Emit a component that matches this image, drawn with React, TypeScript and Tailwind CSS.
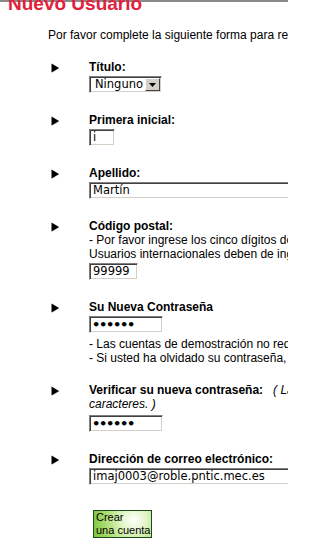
import React from "react";

const Arrow = () => (
  <svg width="9" height="10" viewBox="0 0 9 10" className="block">
    <polygon points="1.2,1.2 8.6,5.4 1.2,9.6" fill="#9a9a9a" opacity="0.6" />
    <polygon points="0.5,0.5 8,5 0.5,9.5" fill="#000" />
  </svg>
);

const inputCls =
  "h-[17px] bg-white border border-t-[#808080] border-l-[#808080] border-b-white border-r-white shadow-[inset_1px_1px_0_#404040,inset_-1px_-1px_0_#d4d0c8] font-['DejaVu_Sans',sans-serif] text-[11.5px] leading-[15px] text-black pl-[3px] whitespace-nowrap overflow-hidden";

const pwCls =
  "h-[17px] bg-white border border-t-[#808080] border-l-[#808080] border-b-white border-r-white shadow-[inset_1px_1px_0_#404040,inset_-1px_-1px_0_#d4d0c8] font-['DejaVu_Sans',sans-serif] text-[13px] leading-[15px] font-bold tracking-[-1.3px] text-black pl-[2px] whitespace-nowrap overflow-hidden";

function Row({
  label,
  children,
  pb = "pb-[20px]",
}: {
  label: React.ReactNode;
  children: React.ReactNode;
  pb?: string;
}) {
  return (
    <div className={`flex ${pb}`}>
      <div className="w-[41px] shrink-0 pl-[3px] pt-[3px]">
        <Arrow />
      </div>
      <div className="flex flex-col">
        <div className="text-[12px] leading-[14px] font-bold text-black whitespace-nowrap">{label}</div>
        {children}
      </div>
    </div>
  );
}

export default function App() {
  return (
    <div className="relative w-[288px] h-[550px] overflow-hidden bg-white font-['Liberation_Sans',Arial,sans-serif] text-black">
      <div className="absolute top-0 left-0 right-0 h-[2px] bg-[#8a8a8a]" />
      <div className="relative z-10 -mt-[6px] pl-[8px] text-[19px] leading-[19px] font-bold text-[#e3203b] whitespace-nowrap">
        Nuevo Usuario
      </div>
      <div className="mt-[15px] pl-[48px] text-[12px] leading-[14px] whitespace-nowrap">
        Por favor complete la siguiente forma para registrarse como nuevo usuario.
      </div>

      <div className="mt-[18px] pl-[48px] w-[700px]">
        <Row label="Título:">
          <div className="mt-[2px] w-[73px] h-[17px] flex items-center bg-white border border-t-[#808080] border-l-[#808080] border-b-white border-r-white shadow-[inset_1px_1px_0_#404040,inset_-1px_-1px_0_#d4d0c8]">
            <span className="flex-1 pl-[5px] font-['DejaVu_Sans',sans-serif] text-[11.5px] leading-[15px]">Ninguno</span>
            <span className="w-[15px] h-[13px] mr-[1px] flex items-center justify-center bg-[#d4d0c8] border border-t-white border-l-white border-b-[#404040] border-r-[#404040]">
              <svg width="7" height="4" viewBox="0 0 7 4"><polygon points="0,0 7,0 3.5,4" fill="#000" /></svg>
            </span>
          </div>
        </Row>

        <Row label="Primera inicial:">
          <div className={`mt-[2px] w-[26px] ${inputCls}`}>i</div>
        </Row>

        <Row label="Apellido:">
          <div className={`mt-[2px] w-[260px] ${inputCls}`}>Martín</div>
        </Row>

        <Row label="Código postal:">
          <div className="text-[12px] leading-[14px] font-normal whitespace-nowrap">
            - Por favor ingrese los cinco dígitos de su código postal.
          </div>
          <div className="text-[12px] leading-[14px] font-normal whitespace-nowrap">
            Usuarios internacionales deben de ingresar 99999.
          </div>
          <div className={`mt-[2px] w-[49px] ${inputCls}`}>99999</div>
        </Row>

        <Row label="Su Nueva Contraseña" pb="pb-[18px]">
          <div className={`mt-[2px] w-[74px] ${pwCls}`}>••••••</div>
          <div className="mt-[4px] text-[12px] leading-[14px] font-normal whitespace-nowrap">
            - Las cuentas de demostración no requieren contraseña.
          </div>
          <div className="text-[12px] leading-[14px] font-normal whitespace-nowrap">
            - Si usted ha olvidado su contraseña, haga clic aquí.
          </div>
        </Row>

        <Row
          label={
            <>
              Verificar su nueva contraseña:
              <span className="font-normal italic">&nbsp;&nbsp;&nbsp;( Las contraseñas deben tener al menos 6</span>
            </>
          }
        >
          <div className="text-[12px] leading-[14px] font-normal italic whitespace-nowrap">caracteres. )</div>
          <div className={`mt-[4px] w-[74px] ${pwCls}`}>••••••</div>
        </Row>

        <Row label="Dirección de correo electrónico:" pb="pb-[25px]">
          <div className={`mt-[2px] w-[260px] ${inputCls}`}>imaj0003@roble.pntic.mec.es</div>
        </Row>

        <div className="pl-[45px]">
          <div className="w-[59px] h-[28px] border border-[#1d4a1d] bg-[radial-gradient(circle_at_70%_35%,#ffffff_0%,#dff5c4_30%,#9ed65e_75%,#7cc13a_100%)] pl-[2px] text-[11px] leading-[13px] text-black">
            Crear
            <br />
            una cuenta
          </div>
        </div>
      </div>
    </div>
  );
}
